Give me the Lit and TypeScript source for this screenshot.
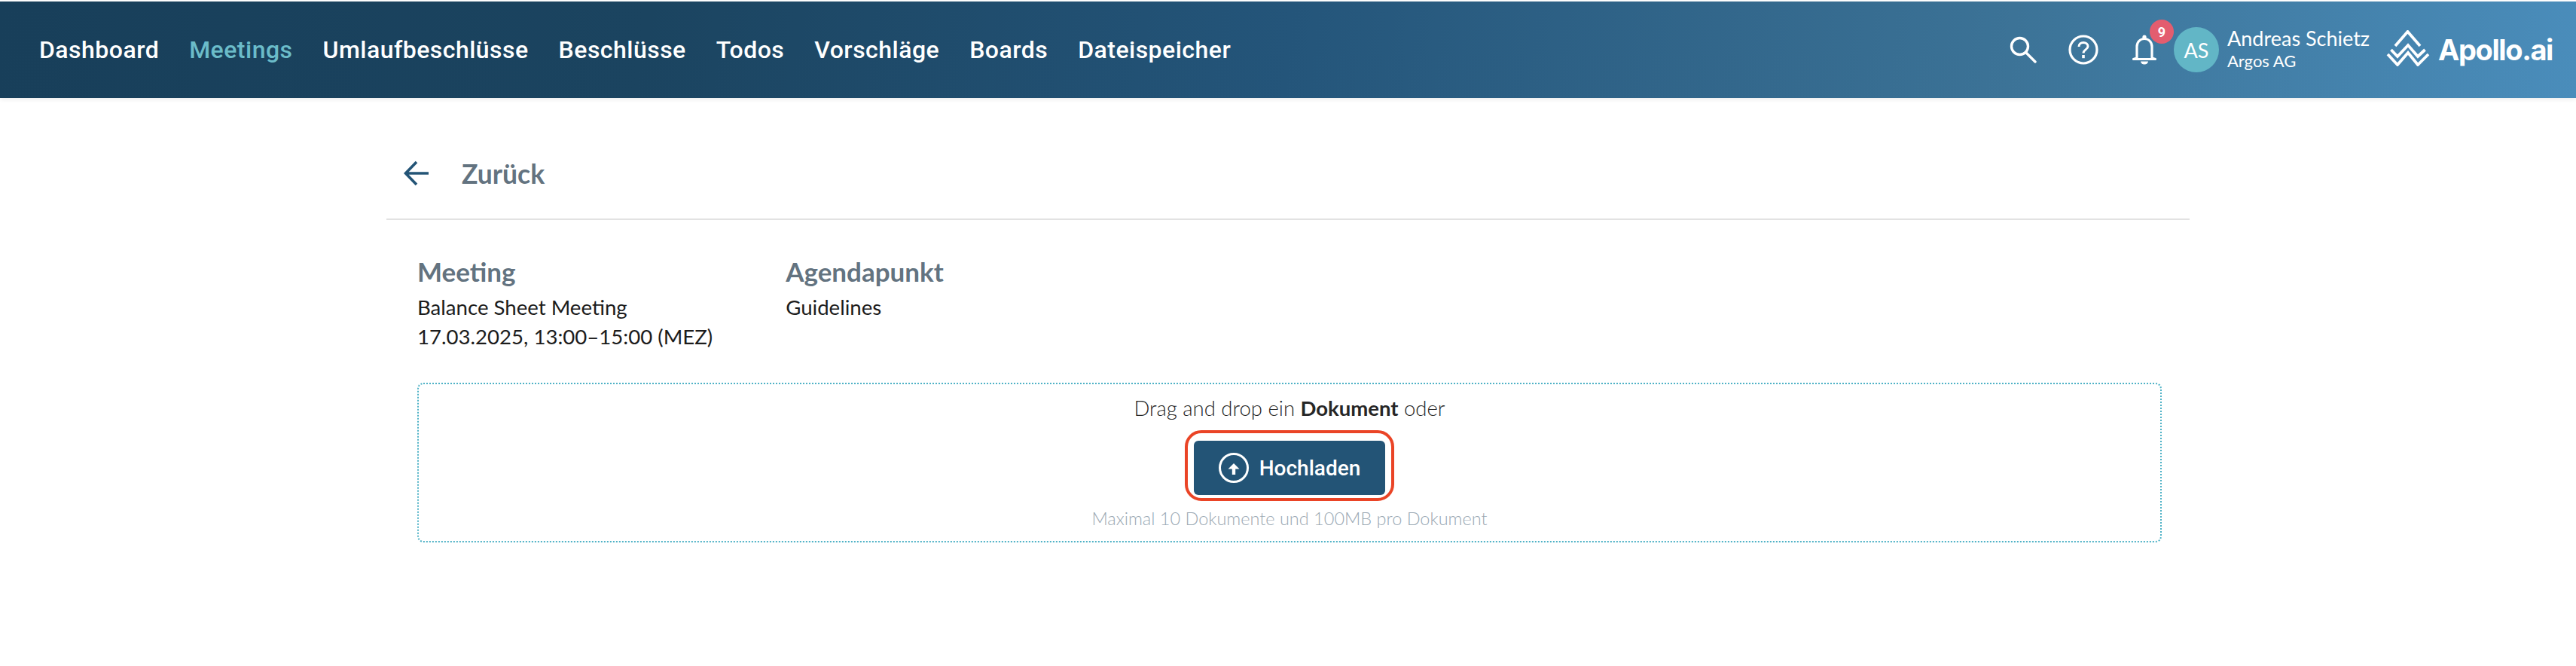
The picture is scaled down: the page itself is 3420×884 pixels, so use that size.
import { LitElement, html, css } from "lit";
import { customElement } from "lit/decorators.js";

const NAV = ["Dashboard", "Meetings", "Umlaufbeschlüsse", "Beschlüsse", "Todos", "Vorschläge", "Boards", "Dateispeicher"];

@customElement("app-root")
export class AppRoot extends LitElement {
  static styles = css`
    :host {
      display: block;
      font-family: "Lato", sans-serif;
      background: #fff;
      min-height: 884px;
      padding-top: 2px;
      box-sizing: border-box;
    }

    header {
      height: 128px;
      box-sizing: border-box;
      padding: 0 31px 0 52px;
      display: flex;
      align-items: center;
      background: linear-gradient(96deg, #183f5a 0%, #1b4460 25%, #24557a 50%, #3c7397 78%, #4a8dbb 100%);
      box-shadow: 0 2px 6px rgba(0, 0, 0, 0.08);
    }

    nav {
      display: flex;
      gap: 40px;
      flex: 1;
    }

    nav a {
      font-family: "Roboto", sans-serif;
      font-weight: 500;
      font-size: 32px;
      letter-spacing: 0.48px;
      color: #fff;
      text-decoration: none;
    }

    nav a.active {
      color: #6bbcc9;
    }

    .tools {
      display: flex;
      align-items: center;
    }

    .icon {
      display: block;
      fill: none;
      stroke: #fff;
    }

    .search {
      width: 36px;
      height: 36px;
      margin-right: 42px;
    }

    .help {
      width: 40px;
      height: 40px;
      margin-right: 44px;
    }

    .bell-wrap {
      position: relative;
      width: 34px;
      height: 40px;
      margin-right: 22px;
    }

    .badge {
      position: absolute;
      left: 24px;
      top: -20px;
      width: 32px;
      height: 32px;
      border-radius: 50%;
      background: #e35d6f;
      color: #fff;
      font-family: "Roboto", sans-serif;
      font-weight: 700;
      font-size: 18px;
      display: flex;
      align-items: center;
      justify-content: center;
    }

    .avatar {
      width: 60px;
      height: 60px;
      border-radius: 50%;
      background: #62b6c6;
      color: #fff;
      font-size: 27px;
      display: flex;
      align-items: center;
      justify-content: center;
      margin-right: 11px;
    }

    .user {
      color: #fff;
      width: 211px;
      line-height: 30px;
      font-size: 27px;
    }

    .user small {
      display: block;
      font-size: 22px;
    }

    .logo-mark {
      width: 58px;
      height: 48px;
      margin: 0 11px 5px 0;
    }

    .wordmark {
      font-family: "Inter", sans-serif;
      font-weight: 700;
      font-size: 38px;
      letter-spacing: -1.4px;
      color: #fff;
    }

    main {
      width: 2394px;
      margin-left: 513px;
    }

    .back {
      height: 162px;
      box-sizing: border-box;
      padding: 40px 0 0 23px;
      display: flex;
      align-items: center;
      gap: 43px;
      border-bottom: 2px solid #e2e2e2;
      color: #637380;
      font-size: 35.5px;
      font-weight: 700;
    }

    .back svg {
      width: 34px;
      height: 34px;
      fill: none;
      stroke: #235476;
      stroke-width: 3.6;
    }

    .meta {
      display: flex;
      gap: 97px;
      padding: 44px 41px 0;
    }

    h2 {
      margin: 0 0 4px;
      color: #637380;
      font-size: 35px;
      font-weight: 700;
      line-height: 48px;
    }

    .meta p {
      margin: 0;
      color: #1c1c1c;
      font-size: 27.6px;
      line-height: 39px;
    }

    .drop {
      margin: 42px 37px 0 41px;
      height: 212px;
      box-sizing: border-box;
      border: 2px dotted #4fb2c6;
      border-radius: 8px;
      display: flex;
      flex-direction: column;
      align-items: center;
      padding-top: 12px;
    }

    .drop p {
      margin: 0;
      font-size: 27.5px;
      font-weight: 300;
      color: #262626;
      line-height: 40px;
    }

    .drop p b {
      font-weight: 700;
    }

    button {
      position: relative;
      margin-top: 23px;
      width: 254px;
      height: 72px;
      border: 0;
      border-radius: 6px;
      background: #235476;
      color: #fff;
      font-family: "Roboto", sans-serif;
      font-weight: 500;
      font-size: 28px;
      display: flex;
      align-items: center;
      justify-content: center;
      gap: 14px;
    }

    /* red review marker drawn around the button */
    button::after {
      content: "";
      position: absolute;
      inset: -14px -12px -8px;
      border: 4px solid #ea4426;
      border-radius: 22px;
    }

    button svg {
      width: 40px;
      height: 40px;
    }

    .drop p.hint {
      margin-top: 11px;
      font-size: 23.5px;
      color: #9aa8b3;
      line-height: 40px;
    }
  `;

  render() {
    return html`
      <header>
        <nav>
          ${NAV.map((n) => html`<a href="#" class=${n === "Meetings" ? "active" : ""}>${n}</a>`)}
        </nav>
        <div class="tools">
          <svg class="icon search" viewBox="0 0 36 36" stroke-width="3.4">
            <circle cx="13.500" cy="13.500" r="11"></circle>
            <path d="M21.500 21.500L34 34" stroke-linecap="round"></path>
          </svg>
          <svg class="icon help" viewBox="0 0 40 40" stroke-width="3.2">
            <circle cx="20" cy="20" r="18"></circle>
            <path d="M14 16c0-3.500 2.600-5.600 6-5.600s6 2.200 6 5.200c0 4.200-6 4.400-6 8.800" stroke-width="3"></path>
            <path d="M20 27v4.200" stroke-width="3.6"></path>
          </svg>
          <div class="bell-wrap">
            <svg class="icon" viewBox="0 0 34 40" width="34" height="40" stroke-width="3.2">
              <path d="M7 31V16c0-6 4-10.500 10-10.500S27 10 27 16v15l4.500 1.500h-29z" stroke-linejoin="round"></path>
              <circle cx="17" cy="3.200" r="2.600" fill="#fff" stroke="none"></circle>
              <path d="M12 35.500h10a5 4 0 0 1-10 0z" fill="#fff" stroke="none"></path>
            </svg>
            <span class="badge">9</span>
          </div>
          <div class="avatar">AS</div>
          <div class="user">Andreas Schietz<small>Argos AG</small></div>
          <svg class="icon logo-mark" viewBox="0 0 58 48" stroke-width="3.8">
            <path d="M2 32l13 14 14-16 13 16 14-14"></path>
            <path d="M6.500 26l8.500 9 14-15 13 15 9.500-9"></path>
            <path d="M12 21L28.500 2 45 21"></path>
          </svg>
          <span class="wordmark">Apollo.ai</span>
        </div>
      </header>
      <main>
        <div class="back">
          <svg viewBox="0 0 34 34"><path d="M33 17H3M17 2L2.500 17 17 32"></path></svg>
          <span>Zurück</span>
        </div>
        <div class="meta">
          <div>
            <h2>Meeting</h2>
            <p>Balance Sheet Meeting</p>
            <p>17.03.2025, 13:00–15:00 (MEZ)</p>
          </div>
          <div>
            <h2>Agendapunkt</h2>
            <p>Guidelines</p>
          </div>
        </div>
        <div class="drop">
          <p>Drag and drop ein <b>Dokument</b> oder</p>
          <button>
            <svg viewBox="0 0 40 40" fill="none" stroke="#fff">
              <circle cx="20" cy="20" r="18.500" stroke-width="3"></circle>
              <path d="M20 29V19" stroke-width="4.400"></path>
              <path d="M12.500 21.500L20 14l7.500 7.500z" fill="#fff" stroke="none"></path>
            </svg>
            Hochladen
          </button>
          <p class="hint">Maximal 10 Dokumente und 100MB pro Dokument</p>
        </div>
      </main>
    `;
  }
}

declare global {
  interface HTMLElementTagNameMap {
    "app-root": AppRoot;
  }
}
